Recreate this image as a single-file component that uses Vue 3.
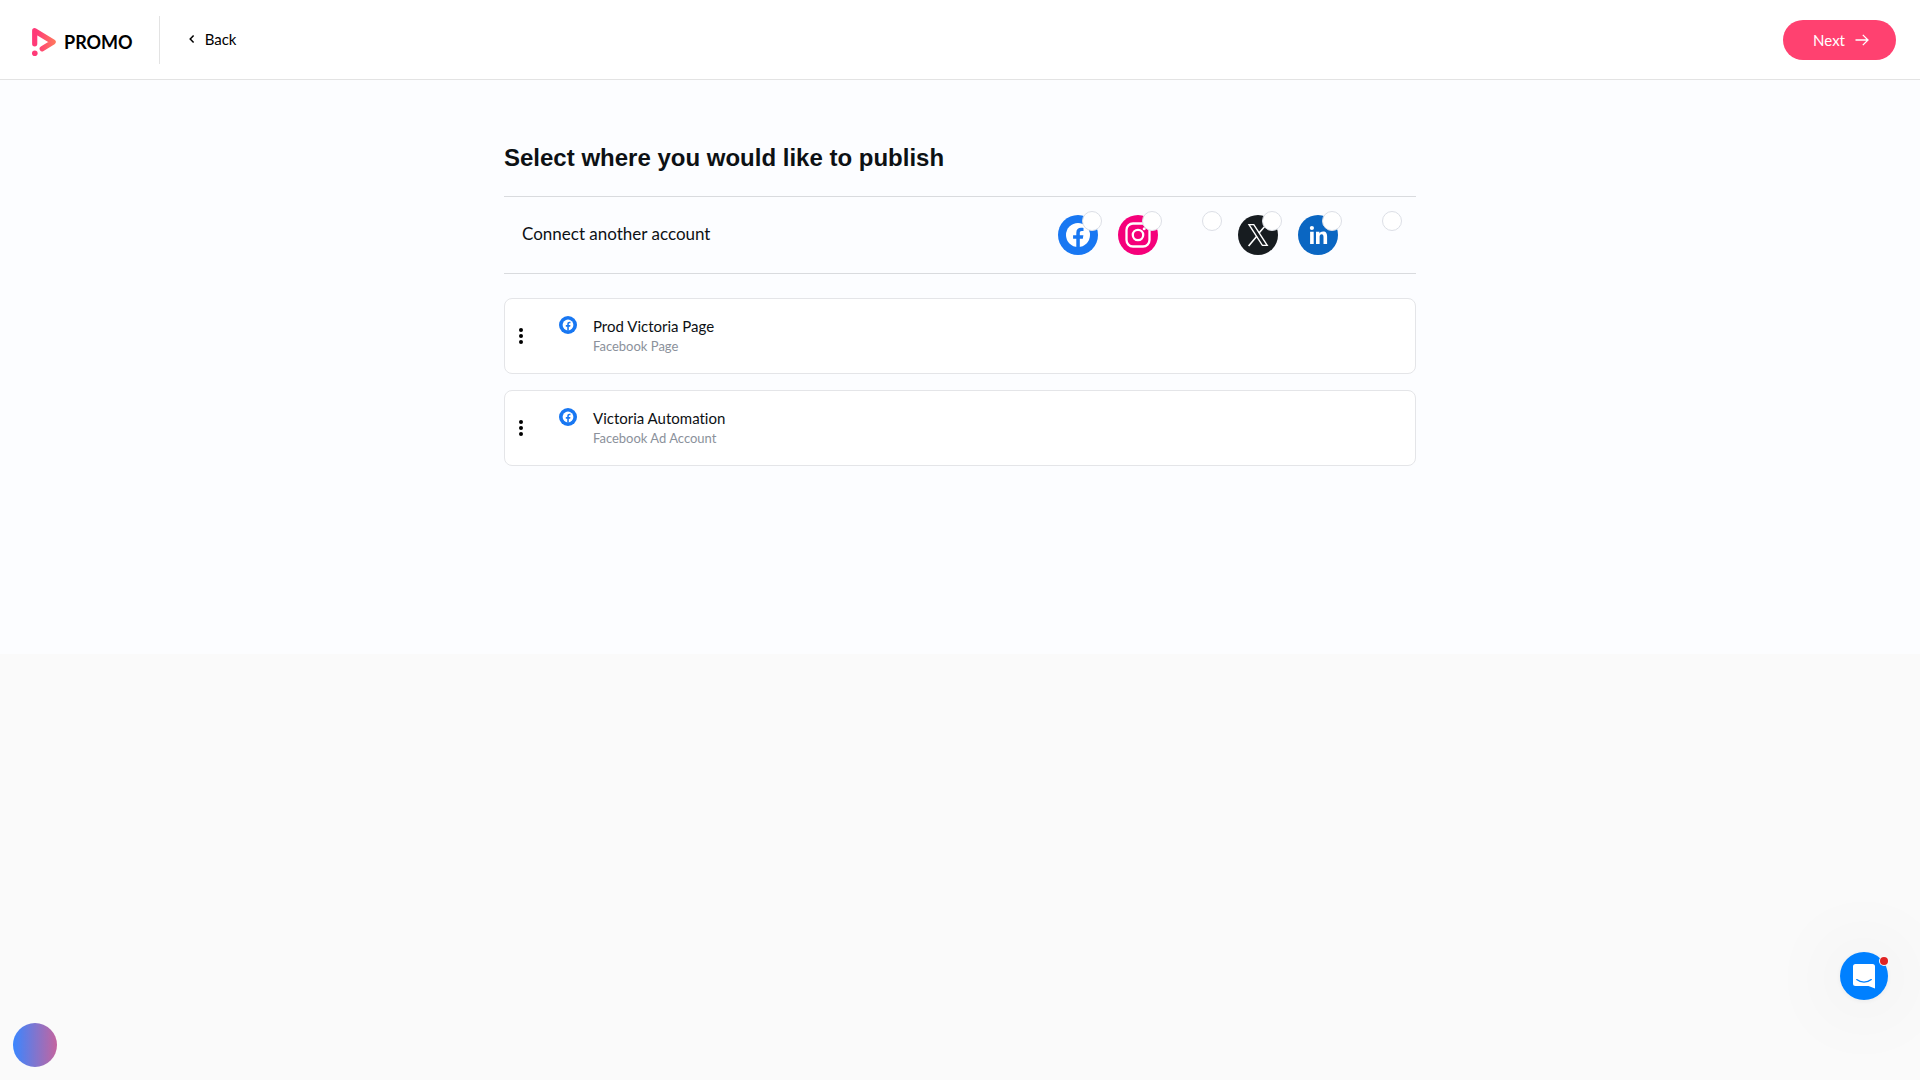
<script setup>
import { ref } from 'vue';

const networks = ref([
  { id: 'facebook', label: 'Connect Facebook', color: '#1877f2' },
  { id: 'instagram', label: 'Connect Instagram', color: '#f5007a' },
  { id: 'youtube', label: 'Connect YouTube', color: 'transparent' },
  { id: 'x', label: 'Connect X', color: '#171c20' },
  { id: 'linkedin', label: 'Connect LinkedIn', color: '#0a66c2' },
  { id: 'tiktok', label: 'Connect TikTok', color: 'transparent' },
]);

const accounts = ref([
  { id: 1, name: 'Prod Victoria Page', type: 'Facebook Page' },
  { id: 2, name: 'Victoria Automation', type: 'Facebook Ad Account' },
]);
</script>

<template>
  <div class="page">
    <header class="topbar">
      <a href="#" class="logo">
        <svg class="logo-mark" width="24" height="28" viewBox="0 0 24 28" aria-hidden="true">
          <defs>
            <linearGradient id="promo-gradient" gradientUnits="userSpaceOnUse" x1="0" y1="0" x2="24" y2="0">
              <stop offset="0.2" stop-color="#ff3a78" />
              <stop offset="1" stop-color="#ff7a5c" />
            </linearGradient>
          </defs>
          <path d="M2.7 15.8V2.7L21.2 14 10.2 20.8" fill="none" stroke="url(#promo-gradient)" stroke-width="5.2" stroke-linecap="round" stroke-linejoin="round" />
          <circle cx="2.8" cy="25.2" r="2.8" fill="#ff3a78" />
        </svg>
        <span class="logo-text">PROMO</span>
      </a>
      <button type="button" class="back">
        <svg width="6" height="10" viewBox="0 0 6 10" aria-hidden="true">
          <path d="M4.6 1.4 1.2 5l3.4 3.6" fill="none" stroke="#000" stroke-width="1.5" />
        </svg>
        Back
      </button>
      <button type="button" class="next">
        Next
        <svg width="14" height="12" viewBox="0 0 14 12" aria-hidden="true">
          <path d="M0.5 6h12.3M7.8 0.9 13 6l-5.2 5.1" fill="none" stroke="#fff" stroke-width="1.3" />
        </svg>
      </button>
    </header>

    <main class="content">
      <div class="container">
        <h1>Select where you would like to publish</h1>

        <section class="connect">
          <span class="connect-label">Connect another account</span>
          <div class="networks">
            <button
              v-for="network in networks"
              :key="network.id"
              type="button"
              class="network"
              :aria-label="network.label"
              :style="{ backgroundColor: network.color }"
            >
              <svg v-if="network.id === 'facebook'" width="40" height="40" viewBox="0 0 40 40">
                <circle cx="20" cy="20" r="12" fill="#fff" />
                <path d="M18.3 33V23.8h-3.2v-3.6h3.2v-2.5c0-3.3 1.9-5 4.8-5 .9 0 1.9.1 2.4.3v3h-1.7c-1.5 0-2 .9-2 1.9v2.3h3.6l-.6 3.6h-3V33z" fill="#1877f2" />
              </svg>
              <svg v-else-if="network.id === 'instagram'" width="40" height="40" viewBox="0 0 40 40" fill="none" stroke="#fff">
                <rect x="8.5" y="8.5" width="23" height="23" rx="6.5" stroke-width="2.3" />
                <circle cx="20" cy="20" r="5.2" stroke-width="2.3" />
                <circle cx="26.2" cy="13.7" r="1.5" fill="#fff" stroke="none" />
              </svg>
              <svg v-else-if="network.id === 'x'" width="40" height="40" viewBox="0 0 40 40" fill="none" stroke="#fff">
                <path d="M11 9.6h4.8L29.2 30.4h-4.8z" stroke-width="1.4" />
                <path d="M28.8 9 21 18M18.8 21.2 10.6 31" stroke-width="1.6" />
              </svg>
              <svg v-else-if="network.id === 'linkedin'" width="40" height="40" viewBox="0 0 40 40" fill="#fff">
                <circle cx="13.9" cy="13" r="2.1" />
                <path d="M12.1 16.7h3.6V29h-3.6zM18 16.7h3.4v1.7c.6-1.1 1.9-2 3.7-2 3.2 0 4 2.1 4 5V29h-3.6v-6.8c0-1.5-.2-2.9-1.9-2.9s-2 1.4-2 2.8V29H18z" />
              </svg>
              <span class="badge"></span>
            </button>
          </div>
        </section>

        <ul class="accounts">
          <li v-for="account in accounts" :key="account.id" class="account">
            <button type="button" class="menu" aria-label="Account options">
              <svg width="4" height="16" viewBox="0 0 4 16">
                <circle cx="2" cy="2" r="2" />
                <circle cx="2" cy="8" r="2" />
                <circle cx="2" cy="14" r="2" />
              </svg>
            </button>
            <svg class="account-icon" width="18" height="18" viewBox="0 0 40 40" aria-hidden="true">
              <circle cx="20" cy="20" r="20" fill="#1877f2" />
              <circle cx="20" cy="20" r="12" fill="#fff" />
              <path d="M18.3 33V23.8h-3.2v-3.6h3.2v-2.5c0-3.3 1.9-5 4.8-5 .9 0 1.9.1 2.4.3v3h-1.7c-1.5 0-2 .9-2 1.9v2.3h3.6l-.6 3.6h-3V33z" fill="#1877f2" />
            </svg>
            <div class="account-text">
              <div class="account-name">{{ account.name }}</div>
              <div class="account-type">{{ account.type }}</div>
            </div>
          </li>
        </ul>
      </div>
    </main>

    <button type="button" class="orb" aria-label="Assistant"></button>
    <button type="button" class="chat" aria-label="Open chat">
      <svg width="22" height="25" viewBox="0 0 22 25" aria-hidden="true">
        <path d="M2.5 0h17A2.5 2.5 0 0 1 22 2.5V24.5l-6.5-2.5h-13A2.5 2.5 0 0 1 0 19.5v-17A2.5 2.5 0 0 1 2.5 0z" fill="#fff" />
        <path d="M3.7 15.6c4.2 3.4 10.4 3.4 14.6 0" fill="none" stroke="#0080ff" stroke-width="1.3" stroke-linecap="round" />
      </svg>
      <span class="unread"></span>
    </button>
  </div>
</template>

<style>
body {
  margin: 0;
  background-color: #fafafa;
}
</style>

<style scoped>
.page {
  font-family: Lato, 'Liberation Sans', sans-serif;
  font-variant-ligatures: none;
  color: #0d1114;
}

button {
  padding: 0;
  border: none;
  background: none;
  font-family: inherit;
  cursor: pointer;
}

svg {
  display: block;
}

.topbar {
  display: flex;
  align-items: center;
  box-sizing: border-box;
  height: 80px;
  padding: 0 24px 0 32px;
  background-color: #fff;
  border-bottom: 1px solid #e3e3e3;
}

.logo {
  display: flex;
  align-items: center;
  gap: 8px;
  height: 48px;
  padding: 4px 26px 0 0;
  box-sizing: border-box;
  border-right: 1px solid #e3e3e3;
  color: #000;
  text-decoration: none;
}

.logo-text {
  font-size: 18px;
  font-weight: 700;
  line-height: 24px;
}

.back {
  display: flex;
  align-items: center;
  gap: 10px;
  margin-left: 29px;
  padding-bottom: 2px;
  color: #000;
  font-size: 15px;
  line-height: 20px;
}

.next {
  display: flex;
  align-items: center;
  gap: 10px;
  height: 40px;
  margin-left: auto;
  padding: 0 27px 0 30px;
  border-radius: 20px;
  background-color: #ff4170;
  color: #fff;
  font-size: 15px;
}

.content {
  min-height: 574px;
  padding-top: 60px;
  box-sizing: border-box;
  background-color: #fcfdff;
}

.container {
  width: 100%;
  max-width: 912px;
  margin: 0 auto;
}

h1 {
  margin: 0 0 20px;
  font-family: 'Liberation Sans', Arial, sans-serif;
  font-size: 24px;
  line-height: 36px;
  font-weight: 700;
}

.connect {
  display: flex;
  align-items: center;
  justify-content: space-between;
  height: 76px;
  padding: 0 18px;
  border-top: 1px solid #d9dbde;
  border-bottom: 1px solid #d9dbde;
}

.connect-label {
  padding-bottom: 2px;
  font-size: 17px;
  line-height: 24px;
}

.networks {
  display: flex;
  gap: 20px;
}

.network {
  position: relative;
  width: 40px;
  height: 40px;
  border-radius: 50%;
}

.badge {
  position: absolute;
  top: -4px;
  right: -4px;
  width: 20px;
  height: 20px;
  box-sizing: border-box;
  border: 1px solid #dcdfe6;
  border-radius: 50%;
  background-color: #fff;
}

.accounts {
  display: flex;
  flex-direction: column;
  gap: 16px;
  margin: 24px 0 0;
  padding: 0;
  list-style: none;
}

.account {
  display: flex;
  align-items: center;
  box-sizing: border-box;
  height: 76px;
  padding-left: 14px;
  border: 1px solid #e4e5e8;
  border-radius: 8px;
  background-color: #fff;
}

.account-icon {
  align-self: flex-start;
  margin: 17px 16px 0 36px;
}

.account-name {
  font-size: 15px;
  line-height: 20px;
}

.account-type {
  color: #8b919b;
  font-size: 13px;
  line-height: 20px;
}

.orb {
  position: fixed;
  left: 13px;
  bottom: 13px;
  width: 44px;
  height: 44px;
  border-radius: 50%;
  background: linear-gradient(90deg, #3a86ff, #c4649f);
}

.chat {
  position: fixed;
  right: 32px;
  bottom: 80px;
  display: flex;
  align-items: center;
  justify-content: center;
  width: 48px;
  height: 48px;
  border-radius: 50%;
  background-color: #0080ff;
  box-shadow: 0 1px 6px rgba(0, 0, 0, 0.06), 0 2px 80px 12px rgba(0, 0, 0, 0.05);
}

.unread {
  position: absolute;
  top: 5px;
  right: 0;
  width: 8px;
  height: 8px;
  border-radius: 50%;
  background-color: #e02424;
  box-shadow: 0 0 0 1px #fafafa;
}
</style>
